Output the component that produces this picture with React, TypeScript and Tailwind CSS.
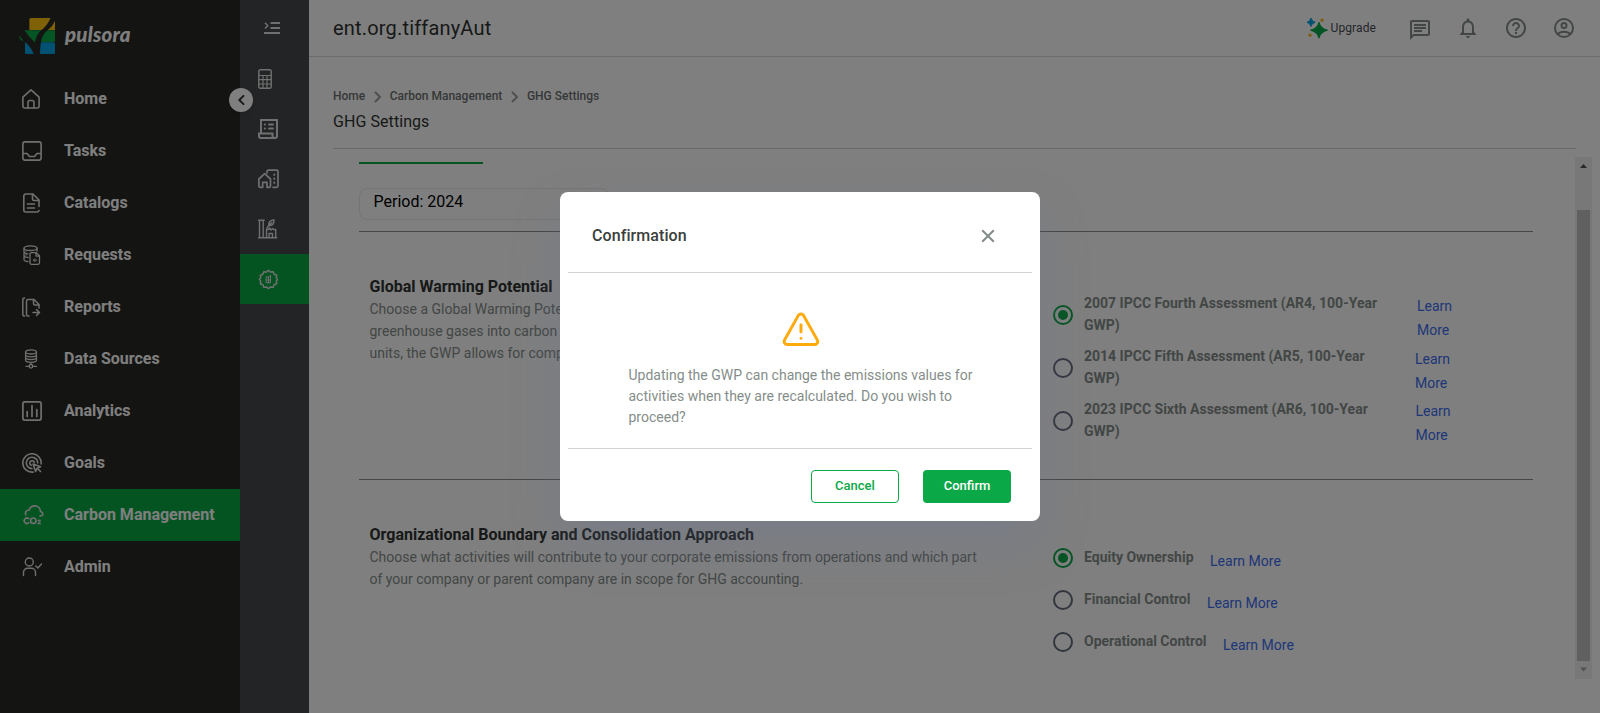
import type { ReactNode } from "react";
import { MdOutlineChat, MdNotificationsNone, MdHelpOutline } from "react-icons/md";

function Icon({ children, w = 20, h = 20, sw = 1.6 }: { children: ReactNode; w?: number; h?: number; sw?: number }) {
  return (
    <svg width={w} height={h} viewBox={`0 0 ${w} ${h}`} fill="none" stroke="currentColor" strokeWidth={sw} strokeLinecap="round" strokeLinejoin="round" className="block shrink-0">
      {children}
    </svg>
  );
}

const navItems: { label: string; icon: ReactNode; active?: boolean }[] = [
  {
    label: "Home",
    icon: (
      <Icon>
        <path d="M.9 8.2 9 .9l8.1 7.3V17a2 2 0 0 1-2 2H2.9a2 2 0 0 1-2-2z" />
        <path d="M6 19v-5.5A2 2 0 0 1 8 11.500h2a2 2 0 0 1 2 2V19" />
      </Icon>
    ),
  },
  {
    label: "Tasks",
    icon: (
      <Icon>
        <rect x=".9" y=".9" width="18.200" height="18.200" rx="2" />
        <path d="M1 12.500h4l2.500 3h5l2.500-3h4" />
      </Icon>
    ),
  },
  {
    label: "Catalogs",
    icon: (
      <Icon>
        <path d="M17 13.500V7l-6-6H3.800a2 2 0 0 0-2 2v14a2 2 0 0 0 2 2H15a2 2 0 0 0 2-1.500" />
        <path d="M10.500 1.500V6a1.500 1.500 0 0 0 1.500 1.500h4.500M5.500 11h7M5.500 15h7" />
      </Icon>
    ),
  },
  {
    label: "Requests",
    icon: (
      <Icon sw={1.3}>
        <ellipse cx="8.500" cy="3.200" rx="6.500" ry="2.300" />
        <path d="M2 3.200v11.300c0 1 1.500 1.900 4 2.200M15 3.200v3M2 7c.5 1 2 1.600 4 1.800M2 10.700c.5 1 2 1.600 4 1.800M4 6h.1M4 10h.1" />
        <path d="M9.500 7.600h4.700l3.300 3.200v7a1.500 1.500 0 0 1-1.500 1.500H9.500A1.500 1.500 0 0 1 8 17.800V9.100a1.500 1.500 0 0 1 1.500-1.500zM14 7.800v3.300h3.300" />
        <path d="M14.800 15.200H11.500M13 13.700l-1.500 1.500 1.500 1.500" strokeWidth="1" />
      </Icon>
    ),
  },
  {
    label: "Reports",
    icon: (
      <Icon sw={1.5}>
        <path d="M2.600.9H2.300A1.500 1.500 0 0 0 .8 2.400v15.200a1.500 1.500 0 0 0 1.500 1.500h.3M7 19.100H6a1.500 1.500 0 0 1-1.500-1.500V4A1.500 1.500 0 0 1 6 2.500h6l5 5V11M11.500 3v3.500A1.500 1.500 0 0 0 13 8h3.500M11 15.500h6M14.500 12.500l3 3-3 3" />
      </Icon>
    ),
  },
  {
    label: "Data Sources",
    icon: (
      <Icon sw={1.3}>
        <ellipse cx="9" cy="2.900" rx="5.400" ry="2.100" />
        <path d="M3.600 2.900v8.300c0 1.200 2.400 2.100 5.400 2.100s5.400-.9 5.400-2.100V2.900M3.600 5.700c0 1.200 2.400 2.100 5.400 2.100s5.400-.9 5.400-2.100M3.600 8.500c0 1.200 2.400 2.100 5.400 2.100s5.400-.9 5.400-2.100M9 13.500v2M4 17.300h3M11 17.300h3.500" />
        <circle cx="9" cy="17.300" r="1.800" />
      </Icon>
    ),
  },
  {
    label: "Analytics",
    icon: (
      <Icon sw={1.700}>
        <rect x=".9" y=".9" width="18.200" height="18.200" rx="1.800" />
        <path d="M5.200 10.500v5M10 4.700v10.800M14.800 8.500v7" />
      </Icon>
    ),
  },
  {
    label: "Goals",
    icon: (
      <Icon sw={1.6}>
        <path d="M11 19.100A9.200 9.200 0 1 1 19.100 11M10 15.600A5.700 5.700 0 1 1 15.700 10M9.300 12.200A2.300 2.300 0 1 1 12.300 9.500" />
        <path d="m11 11 2.600 7.500 1.600-3.300 3.300-1.500zM15.500 15.500l3 3" />
      </Icon>
    ),
  },
  {
    label: "Carbon Management",
    active: true,
    icon: (
      <svg width="22" height="20" viewBox="0 0 22 20" fill="none" stroke="currentColor" strokeWidth="1.600" strokeLinecap="round" className="block shrink-0">
        <path d="M3.900 10C2.600 7.500 4.400 5 7.200 5c.8-2.600 3-4.100 5.500-4.100 3.200 0 5.500 2.300 5.700 5.300 1.700.6 2.700 2 2.300 3.800-.2.700-1.600.9-2.700.9" />
        <path d="M6.800 13.700a2.700 2.700 0 1 0 0 4" />
        <circle cx="11.300" cy="15.700" r="2.700" />
        <path d="M16 15.700c.3-.9 2.300-.9 2.200.3-.1 1-2 1.300-2.200 2.700h2.500" strokeWidth="1.200" />
      </svg>
    ),
  },
  {
    label: "Admin",
    icon: (
      <Icon sw={1.400}>
        <circle cx="7.300" cy="5" r="4" />
        <path d="M1.500 18.500V15.300a4 4 0 0 1 4-4h4a4 4 0 0 1 4 4v3.200M13.800 9l2 2L19.500 7" />
      </Icon>
    ),
  },
];

const subItems: { icon: ReactNode; active?: boolean }[] = [
  {
    icon: (
      <Icon sw={1.400}>
        <rect x=".8" y=".8" width="12.400" height="18.400" rx="1.500" />
        <path d="M1 6.500h12M1 10.700h12M1 15h12M5 6.500V19M9 6.500V19" strokeWidth="1.200" />
      </Icon>
    ),
  },
  {
    icon: (
      <Icon sw={2}>
        <path d="M3 14V1h16V17a2 2 0 0 1-2 2H3a2 2 0 0 1-2-2V14.500H14.500V17a1.800 1.800 0 0 0 2.500 1.800" strokeLinejoin="miter" />
        <path d="M6.800 5.500h.2M11 5.500h4M6.800 9.500h.2M11 9.500h4" />
      </Icon>
    ),
  },
  {
    icon: (
      <Icon w={21} sw={1.700}>
        <path d="M.9 10 6.700 4.700 12.500 10v6.800a1.500 1.500 0 0 1-1.500 1.500H9v-5H4.700v5H2.400A1.500 1.500 0 0 1 .9 16.800zM9 4V2.600a1.500 1.500 0 0 1 1.500-1.500h8a1.500 1.500 0 0 1 1.500 1.500v14.200a1.500 1.500 0 0 1-1.500 1.500H15" />
        <path d="M16.300 5.500v.4M16.300 9.500v.4M16.300 13.500v.4" strokeWidth="1.900" />
      </Icon>
    ),
  },
  {
    icon: (
      <Icon sw={1.400}>
        <path d="M0 18.800h18.700M1.500 18.500V1.200h3.700v17.300M.5 1.200h5.700M8.500 18.500v-8h2l1-1.500 1.500 2 1.500-1.500 1 1h2.200v8M11 18.500v-4h3.500v4M9 9l2.500-3.500" />
        <path d="M10.800 6.500C10 3 12.500 1 16 1c.2 3.500-1.500 6-5.200 5.500zl3-3" />
      </Icon>
    ),
  },
  {
    active: true,
    icon: (
      <Icon sw={1.500}>
        <path d="M10.500 1.300l2 1.800 2.700-.4.9 2.600 2.600.9-.4 2.700 1.300 1.600-1.300 1.600.4 2.700-2.600.9-.9 2.600-2.700-.4-2 1.800-2-1.800-2.700.4-.9-2.600-2.600-.9.4-2.700L1.400 10.500l1.300-1.600-.4-2.700 2.600-.9.9-2.600 2.700.4z" />
        <path d="M8.500 8h2l2-1.500v7.300h-4zM8.500 11h4M10.500 8v5.800" strokeWidth="1" />
      </Icon>
    ),
  },
];

function Radio({ checked }: { checked?: boolean }) {
  return checked ? (
    <span className="flex size-5 shrink-0 items-center justify-center rounded-full border-2 border-[#0ba847]">
      <span className="size-[10px] rounded-full bg-[#0ba847]" />
    </span>
  ) : (
    <span className="size-5 shrink-0 rounded-full border-2 border-[#626a7d]" />
  );
}

const gwpOptions = [
  { label: "2007 IPCC Fourth Assessment (AR4, 100-Year", checked: true, link: "ml-[44px] mt-[2px]" },
  { label: "2014 IPCC Fifth Assessment (AR5, 100-Year", checked: false, link: "ml-[42px] mt-[2px]" },
  { label: "2023 IPCC Sixth Assessment (AR6, 100-Year", checked: false, link: "ml-[42.500px] mt-px" },
];

const boundaryOptions = [
  { label: "Equity Ownership", checked: true },
  { label: "Financial Control", checked: false },
  { label: "Operational Control", checked: false },
];

function Logo() {
  return (
    <div className="flex h-[73px] items-start pl-[19px] pt-[18px]">
      <svg width="36" height="36" viewBox="0 0 36 36" className="block shrink-0">
        <path d="M12 0h19.500Q28 8 22.500 12H10.400V1.600Q10.400 0 12 0z" fill="#ffc20e" />
        <path d="M36 3v9H29Q33.500 8.500 36 3z" fill="#ffc20e" />
        <path d="M5.500 12.200H22Q17.500 16 15.800 24.500Q10 19 5.500 12.200z" fill="#0ba847" />
        <path d="M28.500 12.200H36V22.500Q36 24 34.500 24H22Q23 16.500 28.500 12.200z" fill="#0ba847" />
        <path d="M0 18Q3 19.500 4.500 23.500Q1 22.500 0 18z" fill="#0ba847" />
        <path d="M6 24.300Q11 27.500 14.800 36H7.500Q6 36 6 34.500z" fill="#00a3e4" />
        <path d="M22 24.300H34.500Q36 24.300 36 26V34.500Q36 36 34.500 36H21Q21 30 22 24.300z" fill="#00a3e4" />
      </svg>
      <span className="ml-[10px] mt-[2px] font-['Lato',sans-serif] text-[20.500px] leading-7 font-black italic tracking-[0.2px] text-white">pulsora</span>
    </div>
  );
}

export default function App() {
  return (
    <div className="relative flex h-[713px] w-[1600px] overflow-hidden bg-white font-[Roboto,sans-serif] text-[#2f3331]">
      <aside className="h-full w-[240px] shrink-0 bg-[#292926]">
        <Logo />
        <nav>
          {navItems.map((n) => (
            <a key={n.label} className={`flex h-[52px] items-center pl-[22px] text-base font-bold text-white ${n.active ? "bg-[#08a845]" : ""}`}>
              <span className="w-[42px] text-[#e0e0e0]">{n.icon}</span>
              {n.label}
            </a>
          ))}
        </nav>
      </aside>

      <aside className="relative h-full w-[69px] shrink-0 bg-[#46484b] text-[#e0e0e0]">
        <div className="h-[54px] pl-6 pt-[22px]">
          <svg width="16" height="12" viewBox="0 0 16 12" fill="none" stroke="currentColor" strokeWidth="2" className="block">
            <path d="M6.500 1H16M6.500 6H16M0 11h16" />
            <path d="m1 .8 2.800 2.900L1 6.600" strokeWidth="1.500" />
          </svg>
        </div>
        {subItems.map((s, i) => (
          <div key={i} className={`flex h-[50px] items-center pl-[18px] ${s.active ? "bg-[#08a845]" : ""}`}>
            {s.icon}
          </div>
        ))}
        <button className="absolute left-[-11px] top-[88px] flex size-6 items-center justify-center rounded-full bg-white text-[#2f3331] shadow-md">
          <svg width="8" height="10" viewBox="0 0 8 10" fill="none" stroke="currentColor" strokeWidth="1.900" strokeLinecap="round" strokeLinejoin="round">
            <path d="M6.500.9 2.300 5l4.200 4.100" />
          </svg>
        </button>
      </aside>

      <main className="flex min-w-0 flex-1 flex-col">
        <header className="flex h-[57px] shrink-0 items-center border-b border-[#d9d9d9] pl-6 pr-6">
          <h1 className="flex-1 text-xl font-normal tracking-[0.18px]">ent.org.tiffanyAut</h1>
          <div className="flex items-center text-xs">
            <svg width="21" height="21" viewBox="0 0 21 21" className="mr-[3px] block">
              <path d="M12 4.200Q13.500 10.500 20.500 12.200Q13.500 14 12 20.200Q10.500 14 3.500 12.200Q10.500 10.500 12 4.200z" fill="#0ba847" stroke="#0ba847" />
              <path d="M4 0Q4.800 3.500 8.200 4.300Q4.800 5 4 8.500Q3.200 5 0 4.300Q3.200 3.500 4 0z" fill="#00a3e4" stroke="#00a3e4" strokeWidth="1" />
              <path d="M15 .3Q15.300 1.900 17 2.200Q15.300 2.500 15 4.100Q14.700 2.500 13 2.200Q14.700 1.900 15 .3z" fill="#ffb81c" stroke="#ffb81c" strokeWidth=".6" />
              <path d="M3 15.300Q3.300 16.900 5 17.200Q3.300 17.500 3 19.100Q2.700 17.500 1 17.200Q2.700 16.900 3 15.300z" fill="#ffb81c" stroke="#ffb81c" strokeWidth=".6" />
            </svg>
            <span className="tracking-[0.1px] text-[#4a4d55]">Upgrade</span>
          </div>
          <div className="ml-8 flex items-center gap-6 text-[#858e8a]">
            <MdOutlineChat size={24} className="mt-1" />
            <MdNotificationsNone size={24} />
            <MdHelpOutline size={24} />
            <svg width="24" height="24" viewBox="0 0 24 24" fill="none" stroke="currentColor" strokeWidth="2">
              <circle cx="12" cy="12" r="9" />
              <circle cx="12" cy="9.500" r="2.500" />
              <path d="M5.800 18.200c2.500-3.200 9.900-3.200 12.400 0" />
            </svg>
          </div>
        </header>

        <div className="ml-6 mr-6 flex h-[92px] shrink-0 flex-col border-b border-[#d0d0d0] pt-[31px]">
          <div className="flex h-4 items-center text-xs font-medium text-[#6b7070]">
            <span>Home</span>
            <Chevron />
            <span>Carbon Management</span>
            <Chevron />
            <span>GHG Settings</span>
          </div>
          <h2 className="mt-[6px] text-base leading-6 font-normal tracking-[0.07px]">GHG Settings</h2>
        </div>

        <div className="ml-6 mr-2 mt-2 flex h-[522px]">
          <div className="min-w-0 flex-1 pl-[26px] pt-[5px] pr-[42px]">
            <div className="h-[2px] w-[124px] bg-[#08a845]" />
            <div className="mt-6 h-8 w-[250px] rounded-lg border border-[#e8e8ec] pl-[13.500px] text-base leading-[26px] text-black">Period: 2024</div>
            <section className="mt-[11px] flex h-[248px] border-t border-[#8c8c8c] pl-[10.500px] pt-[43px]">
              <div className="w-[683.500px] pr-[60px]">
                <h3 className="text-base leading-[23px] font-bold">Global Warming Potential</h3>
                <p className="text-sm leading-[22px] text-[#858e8a]">
                  Choose a Global Warming Potential
                  <br />
                  greenhouse gases into carbon
                  <br />
                  units, the GWP allows for comparison
                </p>
              </div>
              <div className="pt-[17px]">
                {gwpOptions.map((o) => (
                  <div key={o.label} className="flex h-[53px] items-start">
                    <div className="flex h-[44px] w-[320px] items-center gap-[11px]">
                      <div className="flex shrink-0 pt-[2px]">
                        <Radio checked={o.checked} />
                      </div>
                      <div className="text-sm leading-[22px] font-bold whitespace-nowrap text-[#858e8a]">
                        {o.label}
                        <br />
                        GWP)
                      </div>
                    </div>
                    <a className={`${o.link} text-sm leading-6 text-[#3b6df0]`}>
                      Learn
                      <br />
                      More
                    </a>
                  </div>
                ))}
              </div>
            </section>
            <section className="flex border-t border-[#8c8c8c] pl-[10.500px] pt-[43px]">
              <div className="w-[683.500px] pr-[60px]">
                <h3 className="text-base leading-[23px] font-bold">Organizational Boundary and Consolidation Approach</h3>
                <p className="text-sm leading-[22px] whitespace-nowrap text-[#858e8a]">
                  Choose what activities will contribute to your corporate emissions from operations and which part
                  <br />
                  of your company or parent company are in scope for GHG accounting.
                </p>
              </div>
              <div className="pt-[14px]">
                {boundaryOptions.map((o) => (
                  <div key={o.label} className="flex h-[42px] items-center">
                    <Radio checked={o.checked} />
                    <span className="ml-[11px] pb-[2px] text-sm font-bold text-[#858e8a]">{o.label}</span>
                    <a className="ml-[16.500px] pt-[6px] text-sm text-[#3b6df0]">Learn More</a>
                  </div>
                ))}
              </div>
            </section>
          </div>
          <div className="flex w-[17px] shrink-0 flex-col items-center bg-[#f1f1f1]">
            <svg width="17" height="53" viewBox="0 0 17 53" className="block shrink-0">
              <path d="M5 11h7L8.500 7z" fill="#505050" />
            </svg>
            <div className="w-[13px] flex-1 bg-[#c1c1c1]" />
            <svg width="17" height="18" viewBox="0 0 17 18" className="block shrink-0">
              <path d="M5 6.500h7L8.500 10.500z" fill="#a3a3a3" />
            </svg>
          </div>
        </div>
      </main>

      <div className="absolute inset-0 bg-black/50 pl-[560px] pt-[192px]">
        <div role="dialog" className="flex h-[329px] w-[480px] flex-col rounded-lg bg-white px-2 shadow-[0_24px_48px_rgba(105,120,150,0.3)]">
          <div className="flex h-[81px] items-center justify-between border-b border-[#d0d3d2] pl-6 pr-[37px] pt-[7px]">
            <h2 className="text-base font-medium tracking-[0.08px] text-[#3a3f3d]">Confirmation</h2>
            <svg width="14" height="14" viewBox="0 0 14 14" fill="none" stroke="#858e8a" strokeWidth="2.100" className="mt-px block">
              <path d="m1.200 1.200 11.600 11.600M12.800 1.200 1.200 12.800" />
            </svg>
          </div>
          <div className="flex h-[176px] flex-col border-b border-[#d0d3d2] pl-[60.500px] pr-[50px] pt-[39px]">
            <svg width="38" height="36" viewBox="0 0 38 36" fill="none" stroke="#ffaa0d" strokeWidth="3" strokeLinecap="round" strokeLinejoin="round" className="ml-[153.500px] block">
              <path d="M16.300 3.500a3.100 3.100 0 0 1 5.400 0l14.200 24.600a3 3 0 0 1-2.600 4.500H4.700a3 3 0 0 1-2.600-4.500z" transform="translate(.5 0) scale(.97 1)" />
              <path d="M19 12.800v7M19 26.200v.1" />
            </svg>
            <p className="mt-[17px] text-sm leading-[21px] whitespace-nowrap text-[#858e8a]">
              Updating the GWP can change the emissions values for
              <br />
              activities when they are recalculated. Do you wish to
              <br />
              proceed?
            </p>
          </div>
          <div className="flex justify-end gap-6 pr-[21px] pt-[21px] text-[13px] font-medium">
            <button className="h-[33px] w-[88px] rounded border border-[#0ba847] pb-[2px] text-[#0ba847]">Cancel</button>
            <button className="h-[33px] w-[88px] rounded bg-[#0ba847] pb-[2px] text-white">Confirm</button>
          </div>
        </div>
      </div>
    </div>
  );
}

function Chevron() {
  return (
    <svg width="8" height="12" viewBox="0 0 8 12" fill="none" stroke="#9aa19e" strokeWidth="2" className="mr-[7.500px] ml-[9px] mt-[2px] block shrink-0">
      <path d="m1 1 5 5-5 5" />
    </svg>
  );
}
